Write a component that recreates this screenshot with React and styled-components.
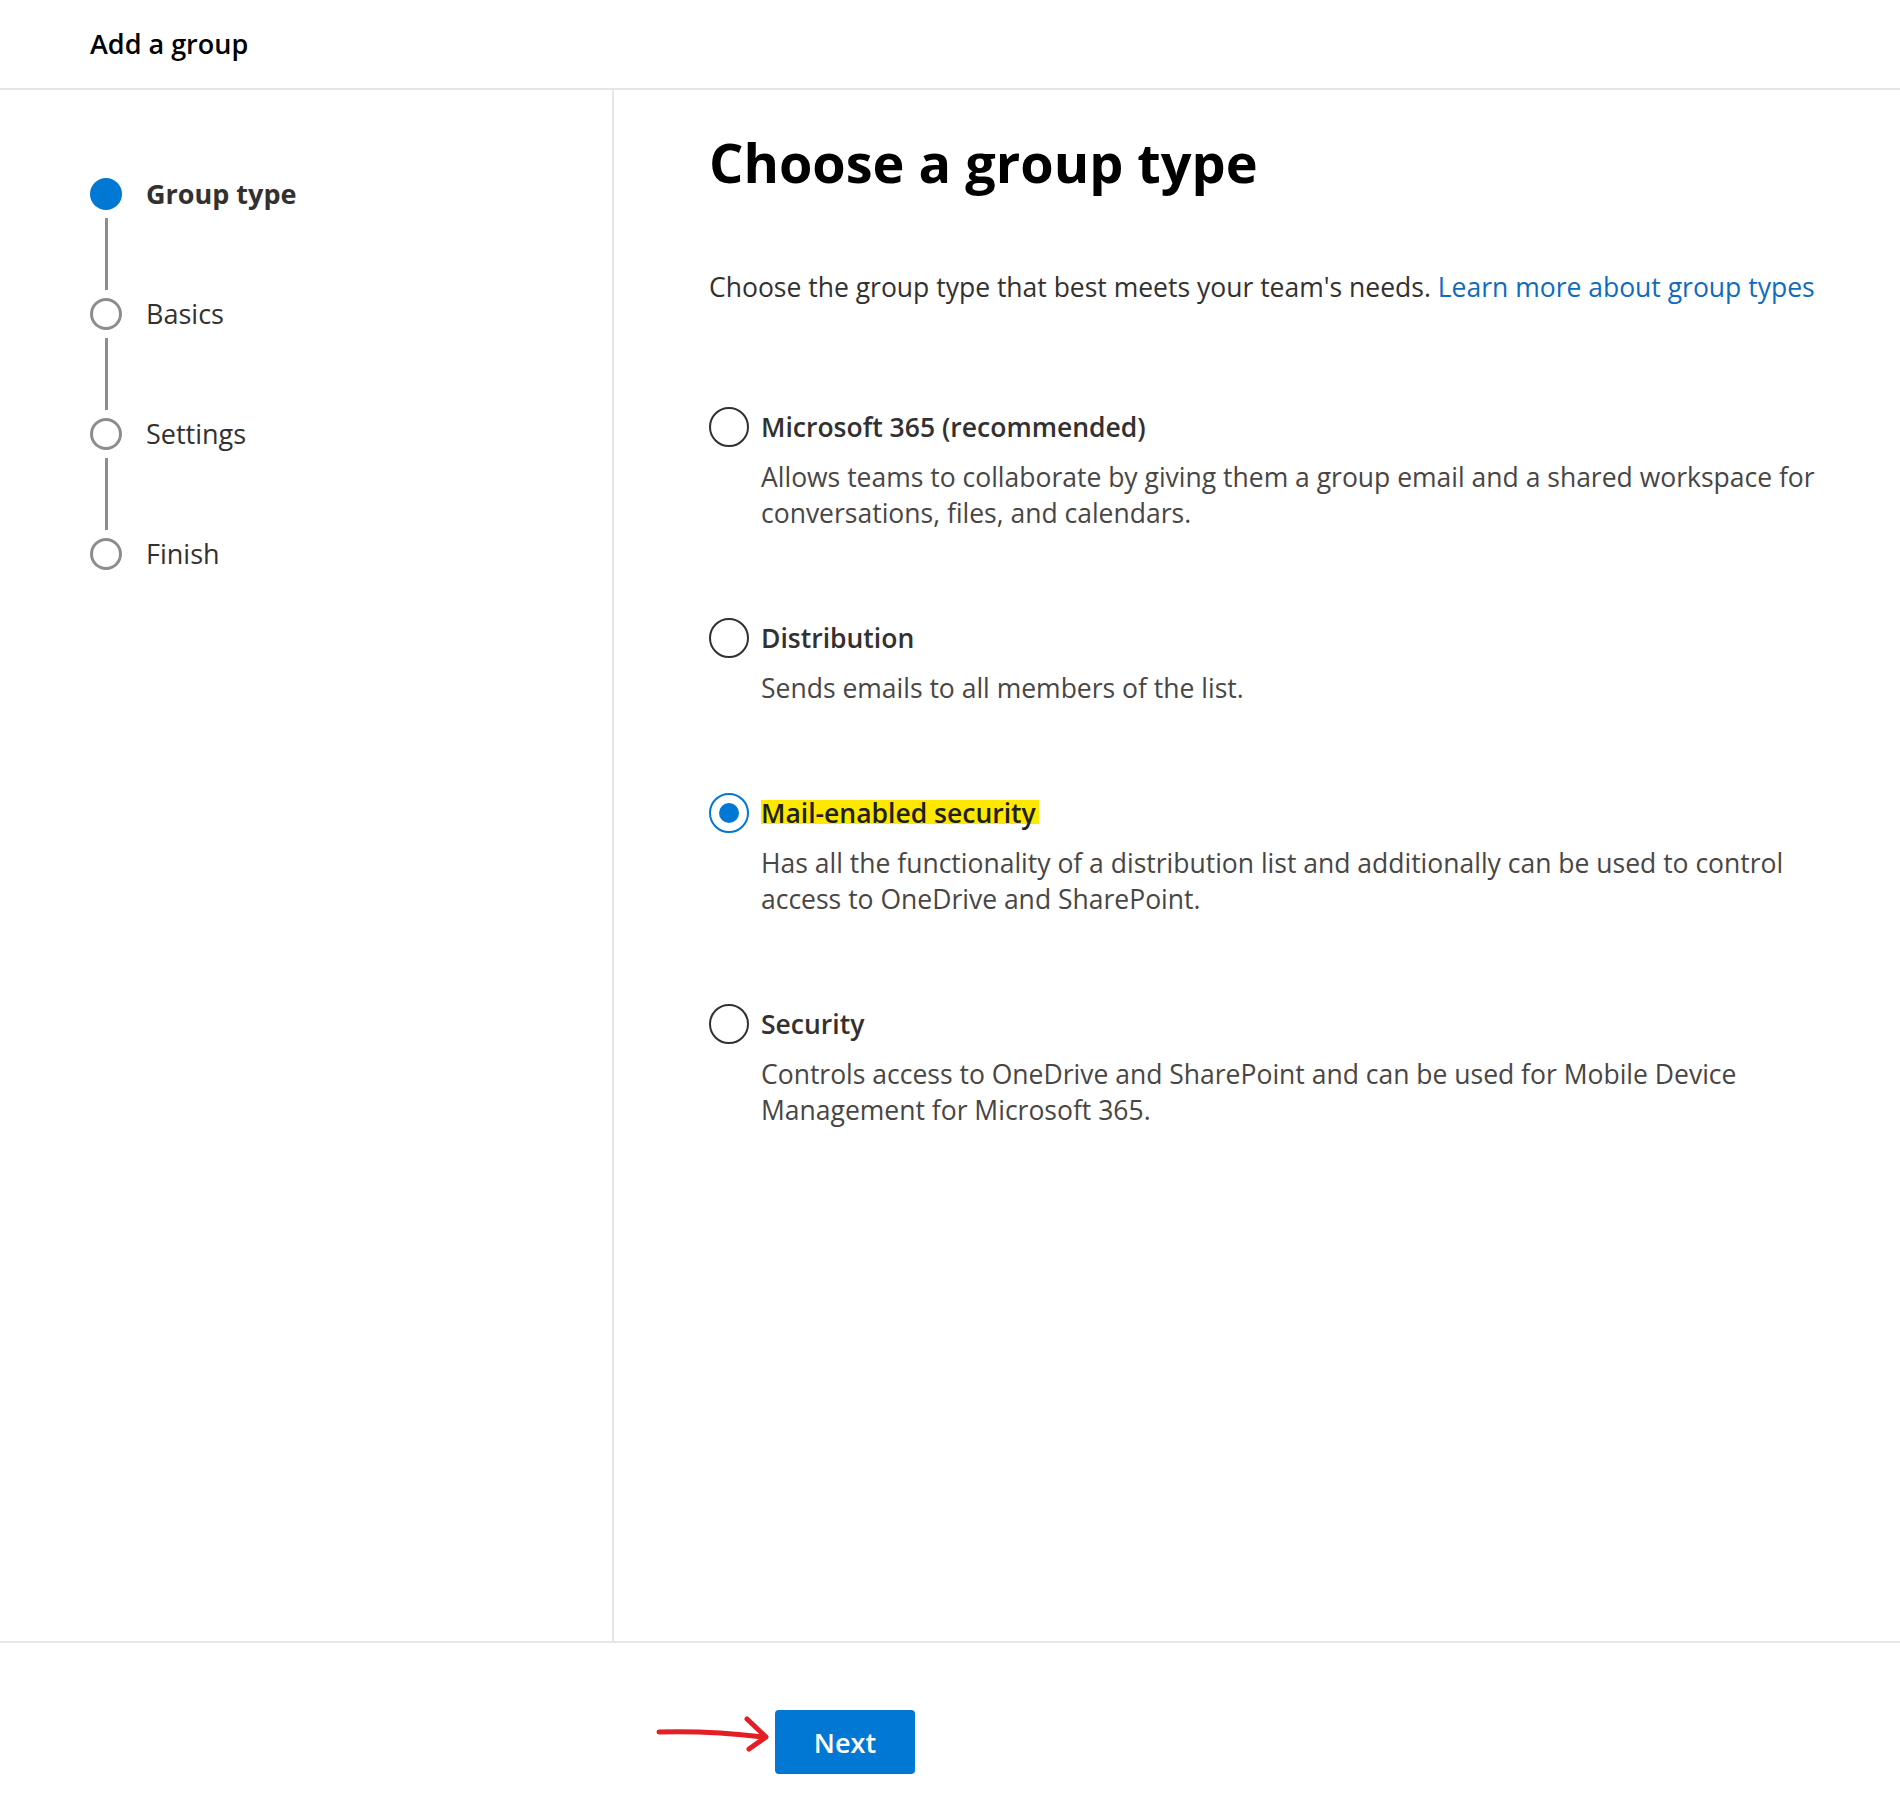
import React, { useState } from 'react';
import styled, { createGlobalStyle } from 'styled-components';

const GlobalStyle = createGlobalStyle`
    html, body {
        margin: 0;
        padding: 0;
        background: #ffffff;
    }
    body {
        font-family: "Open Sans", "Noto Sans", sans-serif;
        color: #323130;
    }
    * {
        box-sizing: border-box;
    }
`;

const Page = styled.div`
    width: 1900px;
    height: 1802px;
    display: flex;
    flex-direction: column;
    background: #ffffff;
`;

const Header = styled.header`
    height: 90px;
    flex-shrink: 0;
    display: flex;
    align-items: center;
    padding: 0 0 2px 90px;
    border-bottom: 2px solid #e6e6e6;
    font-size: 27px;
    font-weight: 600;
    color: #000000;
`;

const Body = styled.div`
    flex: 1;
    display: flex;
    min-height: 0;
`;

const Sidebar = styled.nav`
    width: 614px;
    flex-shrink: 0;
    border-right: 2px solid #e6e6e6;
    padding: 88px 0 0 90px;
`;

const StepRow = styled.div`
    display: flex;
    align-items: center;
    gap: 24px;
    height: 32px;
`;

const StepDot = styled.span`
    width: 32px;
    height: 32px;
    border-radius: 50%;
    flex-shrink: 0;
    background: ${(p) => (p.$active ? '#0078d4' : '#ffffff')};
    border: ${(p) => (p.$active ? 'none' : '3px solid #8f8d8b')};
`;

const StepLabel = styled.span`
    font-size: 27px;
    font-weight: ${(p) => (p.$active ? 700 : 400)};
    color: #323130;
    line-height: 32px;
`;

const Connector = styled.div`
    width: 3px;
    height: 72px;
    margin: 8px 0 8px 14.5px;
    background: #8f8d8b;
`;

const Content = styled.main`
    flex: 1;
    padding: 40px 58px 0 95px;
`;

const Title = styled.h1`
    margin: 0;
    font-size: 54px;
    line-height: 64px;
    font-weight: 700;
    color: #000000;
`;

const Intro = styled.p`
    margin: 75px 0 0;
    font-size: 26.5px;
    line-height: 36px;
    color: #323130;

    a {
        color: #0f6cbd;
        text-decoration: none;
    }
`;

const OptionList = styled.div`
    margin-top: 102px;
    display: flex;
    flex-direction: column;
    gap: 87px;
`;

const Option = styled.div`
    display: flex;
    flex-direction: column;
    cursor: pointer;
`;

const OptionHead = styled.div`
    display: flex;
    align-items: center;
    gap: 12px;
    height: 40px;
`;

const Radio = styled.span`
    position: relative;
    width: 40px;
    height: 40px;
    border-radius: 50%;
    flex-shrink: 0;
    border: 2px solid ${(p) => (p.$checked ? '#0078d4' : '#323130')};

    &::after {
        content: '';
        display: ${(p) => (p.$checked ? 'block' : 'none')};
        position: absolute;
        left: 8px;
        top: 8px;
        width: 20px;
        height: 20px;
        border-radius: 50%;
        background: #0078d4;
    }
`;

const OptionLabel = styled.span`
    font-size: 26.5px;
    line-height: 36px;
    font-weight: 600;
    color: ${(p) => (p.$checked ? '#201f1e' : '#323130')};
`;

const Highlight = styled.span`
    background: linear-gradient(#ffe800, #ffe800) no-repeat;
    background-size: 100% 24px;
    background-position: 0 5px;
    padding-right: 3px;
`;

const OptionDesc = styled.p`
    margin: 12px 0 0 52px;
    max-width: 1090px;
    font-size: 26.5px;
    line-height: 36px;
    color: #484644;
`;

const Footer = styled.footer`
    height: 161px;
    flex-shrink: 0;
    border-top: 2px solid #e6e6e6;
    display: flex;
    align-items: flex-start;
    padding: 67px 0 0 655px;
`;

const ArrowMark = styled.svg`
    width: 116px;
    height: 40px;
    margin-top: 4px;
    flex-shrink: 0;
`;

const NextButton = styled.button`
    width: 140px;
    height: 64px;
    margin-left: 4px;
    border: none;
    border-radius: 4px;
    background: #0078d4;
    color: #ffffff;
    font-family: inherit;
    font-size: 27px;
    font-weight: 600;
    cursor: pointer;

    &:hover {
        background: #106ebe;
    }
`;

const steps = ['Group type', 'Basics', 'Settings', 'Finish'];

const groupTypes = [
    {
        id: 'm365',
        label: 'Microsoft 365 (recommended)',
        desc: 'Allows teams to collaborate by giving them a group email and a shared workspace for conversations, files, and calendars.',
    },
    {
        id: 'distribution',
        label: 'Distribution',
        desc: 'Sends emails to all members of the list.',
    },
    {
        id: 'mailsecurity',
        label: 'Mail-enabled security',
        desc: 'Has all the functionality of a distribution list and additionally can be used to control access to OneDrive and SharePoint.',
        marked: true,
    },
    {
        id: 'security',
        label: 'Security',
        desc: 'Controls access to OneDrive and SharePoint and can be used for Mobile Device Management for Microsoft 365.',
    },
];

const App = () => {
    const [selected, setSelected] = useState('mailsecurity');

    return (
        <>
            <GlobalStyle />
            <Page>
                <Header>Add a group</Header>
                <Body>
                    <Sidebar>
                        {steps.map((step, i) => (
                            <React.Fragment key={step}>
                                {i > 0 && <Connector />}
                                <StepRow>
                                    <StepDot $active={i === 0} />
                                    <StepLabel $active={i === 0}>{step}</StepLabel>
                                </StepRow>
                            </React.Fragment>
                        ))}
                    </Sidebar>
                    <Content>
                        <Title>Choose a group type</Title>
                        <Intro>
                            Choose the group type that best meets your team's needs.{' '}
                            <a href="#learn">Learn more about group types</a>
                        </Intro>
                        <OptionList>
                            {groupTypes.map((g) => {
                                const checked = selected === g.id;
                                return (
                                    <Option key={g.id} onClick={() => setSelected(g.id)}>
                                        <OptionHead>
                                            <Radio $checked={checked} />
                                            <OptionLabel $checked={checked}>
                                                {g.marked ? <Highlight>{g.label}</Highlight> : g.label}
                                            </OptionLabel>
                                        </OptionHead>
                                        <OptionDesc>{g.desc}</OptionDesc>
                                    </Option>
                                );
                            })}
                        </OptionList>
                    </Content>
                </Body>
                <Footer>
                    <ArrowMark viewBox="0 0 116 40">
                        <path
                            d="M4 18 C 40 17, 75 19, 108 23 M92 5 L111 23 L94 35"
                            fill="none"
                            stroke="#e31e24"
                            strokeWidth="5"
                            strokeLinecap="round"
                            strokeLinejoin="round"
                        />
                    </ArrowMark>
                    <NextButton>Next</NextButton>
                </Footer>
            </Page>
        </>
    );
};

export default App;
